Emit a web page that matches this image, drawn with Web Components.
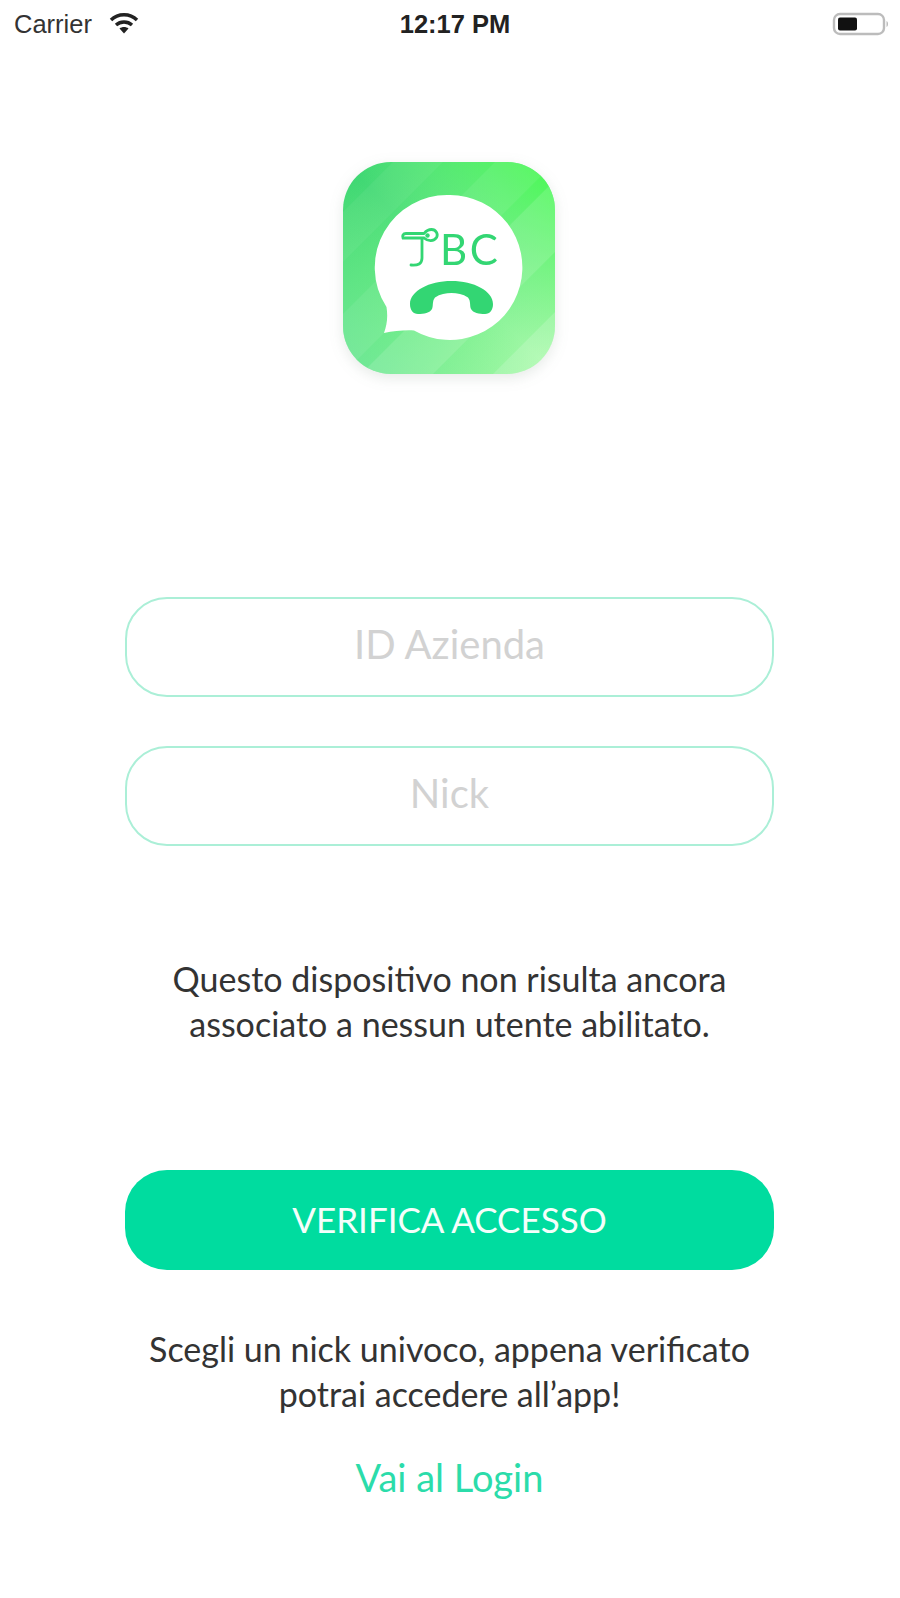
<!DOCTYPE html>
<html lang="it">
<head>
  <meta charset="UTF-8">
  <title>Accesso</title>
  <style>
    html, body { margin: 0; background: #fff; }
    body { font-family: Lato, "Open Sans", sans-serif; }
  </style>
</head>
<body>
  <login-page>
    <status-bar slot="status"></status-bar>
    <app-logo slot="logo"></app-logo>
    <text-field slot="fields">ID Azienda</text-field>
    <text-field slot="fields">Nick</text-field>
    <info-text slot="notice">Questo dispositivo non risulta ancora<br>associato a nessun utente abilitato.</info-text>
    <action-button slot="action">VERIFICA ACCESSO</action-button>
    <info-text slot="hint">Scegli un nick univoco, appena verificato<br>potrai accedere all’app!</info-text>
    <text-link slot="link">Vai al Login</text-link>
  </login-page>

  <script>
    class LoginPage extends HTMLElement {
      constructor() {
        super();
        this.attachShadow({ mode: 'open' }).innerHTML = `
          <style>
            :host { display: block; width: 900px; height: 1598px; overflow: hidden; background: #fff; }
            .logo { display: flex; justify-content: center; padding: 114px 2px 0 0; }
            .form { display: flex; flex-direction: column; padding: 0 126px 0 125px; }
            .fields { display: flex; flex-direction: column; gap: 49px; margin-top: 223px; }
            .notice { margin-top: 110px; }
            .action { margin-top: 124px; }
            .hint { margin-top: 56px; }
            .link { margin-top: 38px; }
          </style>
          <slot name="status"></slot>
          <div class="logo"><slot name="logo"></slot></div>
          <div class="form">
            <div class="fields"><slot name="fields"></slot></div>
            <div class="notice"><slot name="notice"></slot></div>
            <div class="action"><slot name="action"></slot></div>
            <div class="hint"><slot name="hint"></slot></div>
            <div class="link"><slot name="link"></slot></div>
          </div>`;
      }
    }

    class StatusBar extends HTMLElement {
      constructor() {
        super();
        this.attachShadow({ mode: 'open' }).innerHTML = `
          <style>
            :host { display: grid; grid-template-columns: 1fr auto 1fr; align-items: center; height: 48px;
              padding: 0 10px 0 14px; box-sizing: border-box; font-family: "Liberation Sans", sans-serif; color: #222; }
            .left { display: flex; align-items: center; gap: 16px; font-size: 25.500px; color: #333; }
            .time { font-size: 25.500px; font-weight: 700; margin-left: 6px; }
            .right { display: flex; justify-content: flex-end; }
            svg { display: block; }
          </style>
          <div class="left">
            <span>Carrier</span>
            <svg width="32" height="24" viewBox="0 0 30 24">
              <path d="M2 8C9 1 21 1 28 8" fill="none" stroke="#222" stroke-width="3.400"/>
              <path d="M7 13C11.500 9 18.500 9 23 13" fill="none" stroke="#222" stroke-width="3.400"/>
              <path d="M10.500 16.500C13 14.500 17 14.500 19.500 16.500L15 21.500Z" fill="#222"/>
            </svg>
          </div>
          <div class="time">12:17 PM</div>
          <div class="right">
            <svg width="58" height="26" viewBox="0 0 58 26">
              <rect x="2" y="3" width="50" height="20" rx="6" fill="#fff" stroke="#bcbcbc" stroke-width="2.400"/>
              <rect x="6" y="6.500" width="19" height="13" rx="2" fill="#111"/>
              <path d="M54.500 10c2 .5 2 5.500 0 6z" fill="#bcbcbc"/>
            </svg>
          </div>`;
      }
    }

    class AppLogo extends HTMLElement {
      constructor() {
        super();
        this.attachShadow({ mode: 'open' }).innerHTML = `
          <style>
            :host { display: block; width: 212px; height: 212px; }
            svg { display: block; overflow: visible; filter: drop-shadow(0 4px 7px rgba(60, 90, 70, .13)); }
            text { font-family: Lato, sans-serif; font-size: 42px; font-weight: 400; fill: #33d673; letter-spacing: 2.500px; }
          </style>
          <svg width="212" height="212" viewBox="0 0 212 212">
            <defs>
              <linearGradient id="base" x1="0" y1="0" x2="1" y2="1">
                <stop offset="0" stop-color="#38d470"/>
                <stop offset=".5" stop-color="#6dec88"/>
                <stop offset="1" stop-color="#b0fbae"/>
              </linearGradient>
              <linearGradient id="tint" x1="1" y1="0" x2="0" y2="1">
                <stop offset="0" stop-color="#44fb4c" stop-opacity=".95"/>
                <stop offset=".5" stop-color="#70f080" stop-opacity="0"/>
                <stop offset="1" stop-color="#6fe2a4" stop-opacity=".6"/>
              </linearGradient>
              <clipPath id="tile"><rect width="212" height="212" rx="48"/></clipPath>
            </defs>
            <g clip-path="url(#tile)">
              <rect width="212" height="212" fill="url(#base)"/>
              <rect width="212" height="212" fill="url(#tint)"/>
              <path d="M0 50L50 0H100L0 100Z" fill="#fff" opacity=".05"/>
              <path d="M0 152L152 0H212L0 212Z" fill="#fff" opacity=".07"/>
              <path d="M18 212L212 18V90L90 212Z" fill="#fff" opacity=".12"/>
              <path d="M150 212L212 150V212Z" fill="#fff" opacity=".16"/>
            </g>
            <g transform="translate(1 0)">
              <path d="M106 33a72.500 72.500 0 1 1-36 135.500C60 168 50 169 40 171C43 163 44 155 42.500 145A72.500 72.500 0 0 1 106 33Z" fill="#fff"/>
              <text x="96" y="103">BC</text>
              <g fill="none" stroke="#33d673" stroke-width="2.800" stroke-linecap="round">
                <path d="M62 71.500H80M62 71.500C59 71.500 58 74 59 76H80C84 79.500 90 79.500 92.500 75.500C94.500 72 92 67.500 87.500 67.500C84.500 67.500 82 69 80 71.500"/>
                <path d="M78 77V96C78 102 74 103.500 67 103"/>
              </g>
              <circle cx="83.500" cy="73.500" r="2.200" fill="#33d673"/>
              <path d="M107.500 119C130 119 149 129 149 142C149 148 146 152 141 152C135 152 129 151 127 147C125.500 144 127 139 124 135.500C119 132 113 131 107.500 131C102 131 96 132 91 135.500C88 139 89.500 144 88 147C86 151 80 152 74 152C69 152 66 148 66 142C66 129 85 119 107.500 119Z" fill="#33d673"/>
            </g>
          </svg>`;
      }
    }

    class TextField extends HTMLElement {
      constructor() {
        super();
        this.attachShadow({ mode: 'open' }).innerHTML = `
          <style>
            :host { display: flex; align-items: center; justify-content: center; height: 100px; box-sizing: border-box;
              padding-bottom: 6px; border: 2px solid #abefd7; border-radius: 42px; color: #d2d2d2; font-size: 40px; }
          </style>
          <slot></slot>`;
      }
    }

    class InfoText extends HTMLElement {
      constructor() {
        super();
        this.attachShadow({ mode: 'open' }).innerHTML = `
          <style>
            :host { display: block; text-align: center; color: #333; font-size: 34px; line-height: 45px; }
          </style>
          <slot></slot>`;
      }
    }

    class ActionButton extends HTMLElement {
      constructor() {
        super();
        this.attachShadow({ mode: 'open' }).innerHTML = `
          <style>
            :host { display: flex; align-items: center; justify-content: center; height: 100px; padding-bottom: 3px;
              box-sizing: border-box; border-radius: 42px; background: #00dc9f; color: #f4fffb; font-size: 35px; cursor: pointer; }
          </style>
          <slot></slot>`;
      }
    }

    class TextLink extends HTMLElement {
      constructor() {
        super();
        this.attachShadow({ mode: 'open' }).innerHTML = `
          <style>
            :host { display: block; text-align: center; color: #2bdcaa; font-size: 38px; line-height: 46px; cursor: pointer; }
          </style>
          <slot></slot>`;
      }
    }

    customElements.define('login-page', LoginPage);
    customElements.define('status-bar', StatusBar);
    customElements.define('app-logo', AppLogo);
    customElements.define('text-field', TextField);
    customElements.define('info-text', InfoText);
    customElements.define('action-button', ActionButton);
    customElements.define('text-link', TextLink);
  </script>
</body>
</html>
